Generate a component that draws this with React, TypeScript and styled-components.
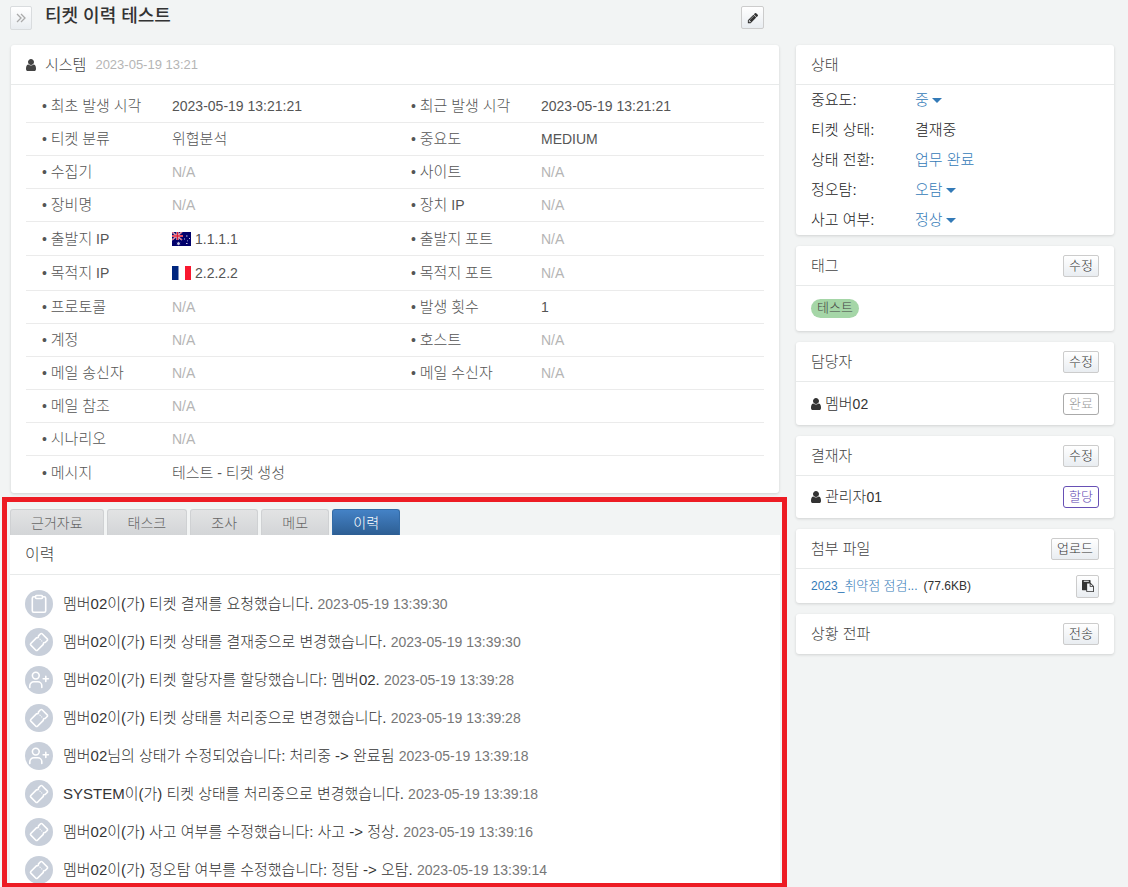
import React from 'react';
import styled, { createGlobalStyle, css } from 'styled-components';

const GlobalStyle = createGlobalStyle`
  *, *::before, *::after { box-sizing: border-box; }
  body {
    margin: 0;
    background: #f2f4f4;
    color: #333;
    font-family: "Liberation Sans", "Noto Sans CJK KR", sans-serif;
    font-size: 14px;
    font-weight: 300;
    line-height: 20px;
  }
  button { font-family: inherit; font-weight: inherit; }
  a { color: #337ab7; text-decoration: none; }
`;

const Page = styled.div`
  display: grid;
  grid-template-columns: minmax(0, 1fr) 318px;
  gap: 9px;
  height: 100vh;
  padding-right: 14px;
  overflow: hidden;
`;

const Main = styled.main`
  display: flex;
  flex-direction: column;
  min-height: 0;
`;

const Sidebar = styled.aside`
  display: flex;
  flex-direction: column;
  gap: 11px;
  padding-top: 45px;
`;

const PageHeader = styled.header`
  display: flex;
  align-items: flex-start;
  height: 45px;
  flex: none;
  padding: 6px 23px 0 10px;
`;

const Title = styled.h1`
  flex: 1;
  margin: 0 0 0 13px;
  font-size: 18px;
  font-weight: 500;
  line-height: 20px;
`;

const raised = css`
  border: 1px solid #ccc;
  border-radius: 2px;
  background: linear-gradient(#fff, #e9edf1);
  color: #333;
`;

const IconButton = styled.button<{ $muted?: boolean }>`
  ${raised}
  display: flex;
  align-items: center;
  justify-content: center;
  width: ${p => (p.$muted ? 22 : 23)}px;
  height: ${p => (p.$muted ? 24 : 23)}px;
  padding: 0;
  ${p => p.$muted && css`border-color: #d9dcde; color: #aaa;`}
`;

const SmallButton = styled.button<{ $tone?: 'done' | 'assigned' }>`
  ${raised}
  height: 22px;
  padding: 0 5px;
  font-size: 13px;
  line-height: 18px;
  ${p => p.$tone === 'done' && css`background: #fff; border-color: #aaa; border-radius: 3px; color: #999;`}
  ${p => p.$tone === 'assigned' && css`background: #fff; border-color: #6750b5; border-radius: 3px; color: #5a41b0;`}
`;

const Card = styled.section`
  background: #fff;
  border-radius: 3px;
  box-shadow: 0 1px 3px rgba(0, 0, 0, 0.14);
`;

const TicketCard = styled(Card)`
  flex: none;
  margin: 0 8px 0 11px;
`;

const CardHeader = styled.header<{ $plain?: boolean }>`
  display: flex;
  align-items: center;
  justify-content: space-between;
  height: 40px;
  padding: 0 15px;
  border-bottom: ${p => (p.$plain ? 0 : 1)}px solid #e8eaea;
  color: #444;
`;

const CardTitle = styled.h2`
  margin: 0;
  font-size: 15px;
  font-weight: inherit;
`;

const Author = styled.div`
  display: flex;
  align-items: center;
  gap: 9px;
  font-size: 15px;
`;

const Time = styled.time<{ $pale?: boolean }>`
  color: ${p => (p.$pale ? '#b5b5b5' : '#777')};
  font-size: ${p => (p.$pale ? 13 : 14)}px;
`;

const Hangul = styled.span<{ $size: number }>`
  font-size: ${p => p.$size}px;
`;

const Details = styled.table`
  width: calc(100% - 30px);
  margin: 0 15px;
  border-collapse: separate;
  border-spacing: 0;
  table-layout: fixed;
  color: #555;
`;

const DetailsWrap = styled.div`
  padding: 5px 0 4px;
`;

const DetailRow = styled.tr<{ $height: number }>`
  height: ${p => p.$height}px;
  &:not(:last-child) > * { border-bottom: 1px solid #ebebeb; }
`;

const Label = styled.th`
  padding: 0 0 0 16px;
  font-weight: inherit;
  text-align: left;
`;

const Value = styled.td<{ $empty?: boolean }>`
  padding: 0;
  color: ${p => (p.$empty ? '#b5b5b5' : 'inherit')};
`;

const Address = styled.span`
  display: flex;
  align-items: center;
  gap: 4px;
`;

/* Highlighted region around the activity tabs */
const Highlight = styled.div`
  display: flex;
  flex: 1;
  flex-direction: column;
  min-height: 0;
  margin: 4px 0 0 2px;
  padding: 7px 2px 0 3px;
  border: 5px solid #ed1c24;
  border-bottom-width: 4px;
  overflow: hidden;
`;

const Tabs = styled.div`
  display: flex;
  flex: none;
  gap: 3px;
`;

const Tab = styled.button<{ $active?: boolean }>`
  min-width: 68px;
  height: 26px;
  padding: 0 20px;
  border: 1px solid #cfd1d3;
  border-bottom: 0;
  border-radius: 3px 3px 0 0;
  background: linear-gradient(#e2e3e4, #d3d5d7);
  color: #666;
  font-size: 14px;
  line-height: 20px;
  ${p => p.$active && css`
    border-color: #336ba6;
    background: linear-gradient(#4482c6, #2d5e93);
    color: #fff;
  `}
`;

const TabPanel = styled.section`
  flex: 1;
  min-height: 0;
  background: #fff;
  overflow: hidden;
`;

const PanelTitle = styled(CardTitle)`
  font-size: 16px;
`;

const Events = styled.ul`
  display: flex;
  flex-direction: column;
  gap: 10px;
  margin: 0;
  padding: 15px;
  list-style: none;
`;

const Event = styled.li`
  display: flex;
  align-items: center;
  gap: 10px;
  font-size: 15px;
`;

const Badge = styled.span`
  display: flex;
  align-items: center;
  justify-content: center;
  width: 28px;
  height: 28px;
  border-radius: 50%;
  background: #c8cfda;
  color: #fff;
`;

const StatusList = styled.dl`
  display: grid;
  grid-template-columns: 104px 1fr;
  grid-auto-rows: 30px;
  align-items: center;
  margin: 0;
  padding: 0 15px;
  color: #222;
  font-size: 15px;
  dd { margin: 0; }
`;

const Dropdown = styled.button`
  display: flex;
  align-items: center;
  gap: 3px;
  padding: 0;
  border: 0;
  background: none;
  color: #337ab7;
  font-size: 15px;
  line-height: 20px;
  &::after {
    content: "";
    border: 0 solid transparent;
    border-width: 5px 5px 0;
    border-top-color: currentColor;
  }
`;

const CardBody = styled.div<{ $height: number }>`
  display: flex;
  align-items: center;
  justify-content: space-between;
  height: ${p => p.$height}px;
  padding: 0 15px;
`;

const Tag = styled.span`
  height: 19px;
  padding: 0 6px;
  border-radius: 10px;
  background: #a5d6a7;
  color: #444;
  font-size: 13px;
  line-height: 17px;
`;

const Person = styled.span`
  display: flex;
  align-items: center;
  gap: 4px;
`;

const FileLine = styled.span`
  display: flex;
  gap: 6px;
  font-size: 12px;
`;

/* Hangul is set one pixel larger than the Latin text beside it. */
const Mixed = ({ text, size = 15 }: { text: string; size?: number }) => (
  <span>
    {text.split(/([가-힣]+)/).map((run, i) => (i % 2 ? <Hangul key={i} $size={size}>{run}</Hangul> : run))}
  </span>
);

const UserIcon = () => (
  <svg width="10" height="14" viewBox="0 0 1280 1792" fill="currentColor" aria-hidden="true">
    <path d="M1280 1399q0 109-62.500 187t-150.500 78h-854q-88 0-150.500-78t-62.500-187q0-85 8.500-160.500t31.500-152 58.500-131 94-89 134.500-34.500q131 128 313 128t313-128q76 0 134.500 34.500t94 89 58.500 131 31.500 152 8.500 160.500zM1024 512q0 159-112.500 271.500t-271.500 112.500-271.500-112.500-112.500-271.500 112.500-271.500 271.500-112.500 271.500 112.500 112.500 271.500z" />
  </svg>
);

const PencilIcon = () => (
  <svg width="12" height="12" viewBox="0 0 1792 1792" fill="currentColor" aria-hidden="true">
    <path d="M491 1536l91-91-235-235-91 91v107h128v128h107zm523-928q0-22-22-22-10 0-17 7l-542 542q-7 7-7 17 0 22 22 22 10 0 17-7l542-542q7-7 7-17zm-54-192l416 416-832 832h-416v-416zm683 96q0 53-37 90l-166 166-416-416 166-165q36-38 90-38 53 0 91 38l235 234q37 39 37 91z" />
  </svg>
);

const PasteIcon = () => (
  <svg width="12" height="12" viewBox="0 0 1792 1792" fill="currentColor" aria-hidden="true">
    <path d="M768 1664h896v-640h-416q-40 0-68-28t-28-68v-416h-384v1152zm256-1440v-64q0-13-9.500-22.500t-22.500-9.500h-704q-13 0-22.500 9.500t-9.500 22.500v64q0 13 9.500 22.500t22.500 9.500h704q13 0 22.500-9.500t9.500-22.500zm256 672h299l-299-299v299zm512 128v672q0 40-28 68t-68 28h-960q-40 0-68-28t-28-68v-160h-544q-40 0-68-28t-28-68v-1344q0-40 28-68t68-28h1088q40 0 68 28t28 68v328q21 13 36 28l408 408q28 28 48 76t20 88z" />
  </svg>
);

const ExpandIcon = () => (
  <svg width="10" height="10" viewBox="0 0 10 10" fill="none" stroke="currentColor" strokeWidth="1.3" aria-hidden="true">
    <path d="M1 1l4 4-4 4M5 1l4 4-4 4" />
  </svg>
);

const stroke = {
  fill: 'none',
  stroke: 'currentColor',
  strokeWidth: 1.6,
  strokeLinecap: 'round' as const,
  strokeLinejoin: 'round' as const,
};

const icons = {
  request: (
    <svg width="28" height="28" viewBox="0 0 28 28" {...stroke} aria-hidden="true">
      <path d="M10.500 6.800H8.800A1.500 1.500 0 0 0 7.300 8.300v12.400a1.500 1.500 0 0 0 1.500 1.500h10.400a1.500 1.500 0 0 0 1.500-1.500V8.300a1.500 1.500 0 0 0-1.500-1.500h-1.700" />
      <rect x="10.500" y="5.500" width="7" height="3" rx="1" />
    </svg>
  ),
  ticket: (
    <svg width="28" height="28" viewBox="0 0 28 28" {...stroke} aria-hidden="true">
      <g transform="rotate(-45 14 14)">
        <path d="M7.100 9.300H15.400q1.300 1.600 2.600 0h2.900a1.100 1.100 0 0 1 1.100 1.100v7.200a1.100 1.100 0 0 1-1.100 1.100h-2.900q-1.300-1.600-2.600 0H7.100a1.100 1.100 0 0 1-1.100-1.100v-7.200a1.100 1.100 0 0 1 1.100-1.100z" />
        <path strokeWidth="1" d="M16.700 12.600v.4M16.700 15v.4" />
      </g>
    </svg>
  ),
  user: (
    <svg width="28" height="28" viewBox="0 0 28 28" {...stroke} aria-hidden="true">
      <circle cx="10.800" cy="9.600" r="3.400" />
      <path d="M4.800 21.500v-1.700a4 4 0 0 1 4-4h4a4 4 0 0 1 4 4v1.700M20.800 10.200v5.200M18.200 12.800h5.200" />
    </svg>
  ),
};

const AustraliaFlag = () => (
  <svg width="19" height="14" viewBox="0 0 19 14" role="img" aria-label="AU">
    <path fill="#00006b" d="M0 0h19v14H0z" />
    <path stroke="#dfdff0" strokeWidth="1.600" d="M0 0l10 8M10 0L0 8" />
    <path stroke="#e0243a" strokeWidth="0.700" d="M0 0l10 8M10 0L0 8" />
    <path stroke="#eee" strokeWidth="2.200" d="M5.500 0v8M0 4h11" />
    <path stroke="#e11c35" strokeWidth="1.400" d="M5.500 0v8M0 4h11" />
    <path fill="#c9c9e6" d="M6.500 9.500l.6 1.200 1.300-.1-.7 1 .7 1-1.300-.1-.6 1-.6-1-1.300.1.700-1-.7-1 1.300.1zM14 3.500h1.500v1H14zM12 6.500h1v1h-1zM17 6h1v1h-1zM15 8.500h1v.8h-1zM14 11h1.500v1H14z" />
  </svg>
);

const FranceFlag = () => (
  <svg width="19" height="14" viewBox="0 0 19 14" role="img" aria-label="FR">
    <path fill="#fff" d="M0 0h19v14H0z" />
    <path fill="#00267f" d="M0 0h6.500v14H0z" />
    <path fill="#f9182f" d="M13 0h6v14h-6z" />
  </svg>
);

type Field = [string, React.ReactNode?];
const rows: { height?: number; fields: Field[] }[] = [
  { fields: [['최초 발생 시각', '2023-05-19 13:21:21'], ['최근 발생 시각', '2023-05-19 13:21:21']] },
  { fields: [['티켓 분류', '위협분석'], ['중요도', 'MEDIUM']] },
  { fields: [['수집기'], ['사이트']] },
  { fields: [['장비명'], ['장치 IP']] },
  { height: 34, fields: [['출발지 IP', <Address><AustraliaFlag />1.1.1.1</Address>], ['출발지 포트']] },
  { height: 35, fields: [['목적지 IP', <Address><FranceFlag />2.2.2.2</Address>], ['목적지 포트']] },
  { fields: [['프로토콜'], ['발생 횟수', '1']] },
  { fields: [['계정'], ['호스트']] },
  { fields: [['메일 송신자'], ['메일 수신자']] },
  { fields: [['메일 참조']] },
  { fields: [['시나리오']] },
  { fields: [['메시지', '테스트 - 티켓 생성']] },
];

const tabs = ['근거자료', '태스크', '조사', '메모', '이력'];

const events: [keyof typeof icons, string, string][] = [
  ['request', '멤버02이(가) 티켓 결재를 요청했습니다.', '2023-05-19 13:39:30'],
  ['ticket', '멤버02이(가) 티켓 상태를 결재중으로 변경했습니다.', '2023-05-19 13:39:30'],
  ['user', '멤버02이(가) 티켓 할당자를 할당했습니다: 멤버02.', '2023-05-19 13:39:28'],
  ['ticket', '멤버02이(가) 티켓 상태를 처리중으로 변경했습니다.', '2023-05-19 13:39:28'],
  ['user', '멤버02님의 상태가 수정되었습니다: 처리중 -> 완료됨', '2023-05-19 13:39:18'],
  ['ticket', 'SYSTEM이(가) 티켓 상태를 처리중으로 변경했습니다.', '2023-05-19 13:39:18'],
  ['ticket', '멤버02이(가) 사고 여부를 수정했습니다: 사고 -> 정상.', '2023-05-19 13:39:16'],
  ['ticket', '멤버02이(가) 정오탐 여부를 수정했습니다: 정탐 -> 오탐.', '2023-05-19 13:39:14'],
];

export default function App() {
  return (
    <>
      <GlobalStyle />
      <Page>
        <Main>
          <PageHeader>
            <IconButton $muted aria-label="목록 펼치기"><ExpandIcon /></IconButton>
            <Title>티켓 이력 테스트</Title>
            <IconButton aria-label="편집"><PencilIcon /></IconButton>
          </PageHeader>

          <TicketCard>
            <CardHeader>
              <Author>
                <UserIcon />
                시스템
                <Time $pale>2023-05-19 13:21</Time>
              </Author>
            </CardHeader>
            <DetailsWrap>
              <Details>
                <colgroup>
                  <col style={{ width: 146 }} />
                  <col />
                  <col style={{ width: 146 }} />
                  <col />
                </colgroup>
                <tbody>
                  {rows.map(({ height = 33, fields }) => (
                    <DetailRow key={fields[0][0]} $height={height}>
                      {fields.map(([label, value]) => (
                        <React.Fragment key={label}>
                          <Label scope="row"><Mixed text={`• ${label}`} /></Label>
                          <Value $empty={!value} colSpan={fields.length === 1 ? 3 : 1}>
                            {typeof value === 'string' ? <Mixed text={value} /> : value ?? 'N/A'}
                          </Value>
                        </React.Fragment>
                      ))}
                    </DetailRow>
                  ))}
                </tbody>
              </Details>
            </DetailsWrap>
          </TicketCard>

          <Highlight>
            <Tabs role="tablist">
              {tabs.map(t => (
                <Tab key={t} role="tab" aria-selected={t === '이력'} $active={t === '이력'}>{t}</Tab>
              ))}
            </Tabs>
            <TabPanel role="tabpanel">
              <CardHeader><PanelTitle>이력</PanelTitle></CardHeader>
              <Events>
                {events.map(([icon, text, time]) => (
                  <Event key={text}>
                    <Badge>{icons[icon]}</Badge>
                    <span>{text} <Time>{time}</Time></span>
                  </Event>
                ))}
              </Events>
            </TabPanel>
          </Highlight>
        </Main>

        <Sidebar>
          <Card>
            <CardHeader><CardTitle>상태</CardTitle></CardHeader>
            <StatusList>
              <dt>중요도:</dt>
              <dd><Dropdown>중</Dropdown></dd>
              <dt>티켓 상태:</dt>
              <dd>결재중</dd>
              <dt>상태 전환:</dt>
              <dd><a href="#complete">업무 완료</a></dd>
              <dt>정오탐:</dt>
              <dd><Dropdown>오탐</Dropdown></dd>
              <dt>사고 여부:</dt>
              <dd><Dropdown>정상</Dropdown></dd>
            </StatusList>
          </Card>

          <Card>
            <CardHeader><CardTitle>태그</CardTitle><SmallButton>수정</SmallButton></CardHeader>
            <CardBody $height={45}><Tag>테스트</Tag></CardBody>
          </Card>

          <Card>
            <CardHeader><CardTitle>담당자</CardTitle><SmallButton>수정</SmallButton></CardHeader>
            <CardBody $height={43}>
              <Person><UserIcon /><Mixed text="멤버02" /></Person>
              <SmallButton $tone="done">완료</SmallButton>
            </CardBody>
          </Card>

          <Card>
            <CardHeader><CardTitle>결재자</CardTitle><SmallButton>수정</SmallButton></CardHeader>
            <CardBody $height={42}>
              <Person><UserIcon /><Mixed text="관리자01" /></Person>
              <SmallButton $tone="assigned">할당</SmallButton>
            </CardBody>
          </Card>

          <Card>
            <CardHeader><CardTitle>첨부 파일</CardTitle><SmallButton>업로드</SmallButton></CardHeader>
            <CardBody $height={34}>
              <FileLine>
                <a href="#file"><Mixed text="2023_취약점 점검..." size={13} /></a>
                <span>(77.6KB)</span>
              </FileLine>
              <IconButton aria-label="복사"><PasteIcon /></IconButton>
            </CardBody>
          </Card>

          <Card>
            <CardHeader $plain><CardTitle>상황 전파</CardTitle><SmallButton>전송</SmallButton></CardHeader>
          </Card>
        </Sidebar>
      </Page>
    </>
  );
}
